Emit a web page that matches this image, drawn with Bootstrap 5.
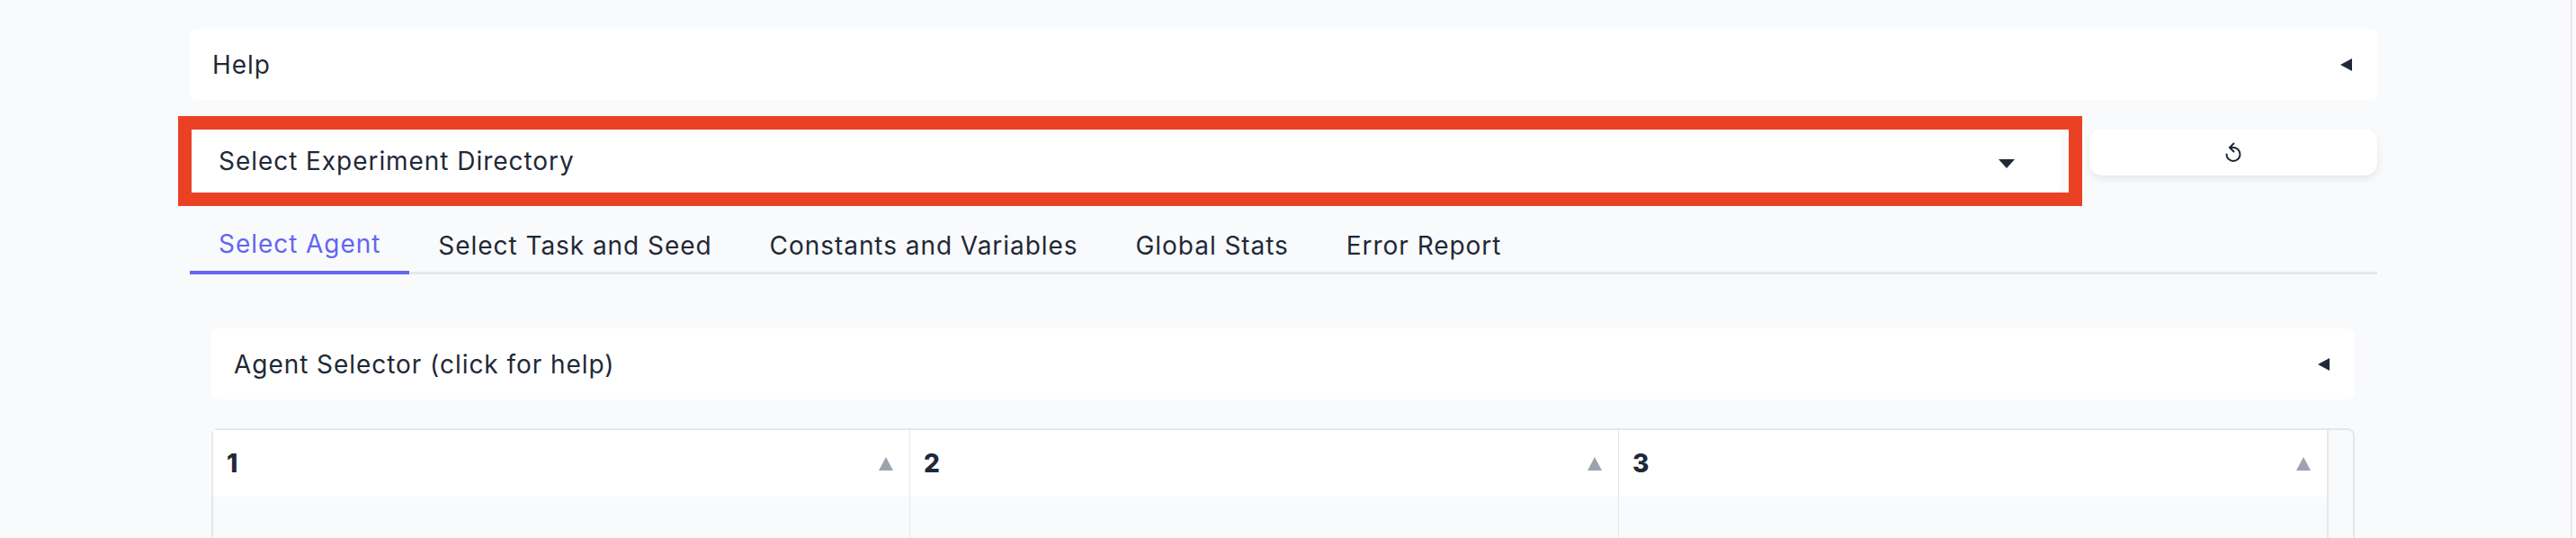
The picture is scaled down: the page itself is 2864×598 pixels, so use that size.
<!DOCTYPE html>
<html lang="en">
<head>
  <meta charset="UTF-8">
  <title>Experiment Viewer</title>
  <link href="https://cdn.jsdelivr.net/npm/bootstrap@5.3.0/dist/css/bootstrap.min.css" rel="stylesheet">
  <style>
    html { background-color: #fbfbfc; }
    body {
      width: 2860px;
      height: 598px;
      overflow: hidden;
      background-color: #f9fafb;
      color: #1f2937;
      font-family: "Inter", "Open Sans", sans-serif;
      font-size: 28px;
      letter-spacing: .95px;
      border-right: 2px solid #e5e7eb;
    }
    .page-wrap { padding: 32px 215px 0 211px; }
    .fold-bar {
      height: 79px;
      background: #fff;
      border-radius: 8px;
      padding: 0 28px 0 25px;
    }
    .tri-left {
      width: 0; height: 0;
      border-top: 7px solid transparent;
      border-bottom: 7px solid transparent;
      border-right: 13px solid #1f2937;
    }
    .tri-down {
      width: 0; height: 0;
      margin-top: 6px;
      border-left: 9px solid transparent;
      border-right: 9px solid transparent;
      border-top: 10px solid #1f2937;
    }
    .tri-up {
      width: 0; height: 0;
      border-left: 8px solid transparent;
      border-right: 8px solid transparent;
      border-bottom: 15px solid #9ca3af;
    }
    .picker-row { margin-top: 18px; margin-left: -13px; height: 100px; }
    .picker-frame {
      width: 2117px;
      border: 15px solid #ea4125;
      height: 100px;
      background: #f9fafb;
      padding-right: 9px;
    }
    .picker-field { background: #fff; padding: 0 51px 0 30px; }
    .reset-btn {
      width: 320px;
      height: 52px;
      margin: 14px 0 0 8px;
      background: #fff;
      border-radius: 14px;
      box-shadow: 0 4px 8px rgba(0,0,0,.08);
    }
    .tab-row { height: 76px; border-bottom: 3px solid #e5e7eb; }
    .tab-item { padding: 12px 32px 0; height: 76px; margin-bottom: -3px; }
    .tab-on { color: #6366f1; border-bottom: 4px solid #6366f1; }
    .agent-wrap { padding: 60px 25px 0 24px; }
    .table-shell {
      margin-top: 32px;
      height: 122px;
      border: 2px solid #e5e7eb;
      border-bottom: 0;
      border-radius: 8px 8px 0 0;
    }
    .col-head {
      height: 74px;
      background: #fff;
      padding: 0 18px 0 15px;
      font-weight: 800;
      letter-spacing: 0;
    }
    .col-one { width: 775px; }
    .col-two, .col-three { width: 788px; }
    .col-cell { border-right: 1px solid #e5e7eb; }
    .col-rest { flex: 1; border-left: 1px solid #e5e7eb; }
  </style>
</head>
<body>
<div class="page-wrap">
  <div class="fold-bar d-flex align-items-center justify-content-between">
    <span>Help</span><span class="tri-left"></span>
  </div>

  <div class="picker-row d-flex">
    <div class="picker-frame d-flex">
      <div class="picker-field flex-grow-1 d-flex align-items-center justify-content-between">
        <span>Select Experiment Directory</span><span class="tri-down"></span>
      </div>
    </div>
    <button type="button" class="reset-btn border-0 d-flex align-items-center justify-content-center p-0" aria-label="Reset">
      <svg width="18" height="22" viewBox="0 0 18 22" fill="none" stroke="#1f2937" stroke-width="2" stroke-linecap="round" stroke-linejoin="round">
        <path d="M5 6H9a7.5 7.5 0 1 1-7.5 7.5"/><path d="M9.5 1.5 5 6l4.5 4.5"/>
      </svg>
    </button>
  </div>

  <div class="tab-row d-flex">
    <div class="tab-item tab-on d-flex align-items-center">Select Agent</div>
    <div class="tab-item d-flex align-items-center">Select Task and Seed</div>
    <div class="tab-item d-flex align-items-center">Constants and Variables</div>
    <div class="tab-item d-flex align-items-center">Global Stats</div>
    <div class="tab-item d-flex align-items-center">Error Report</div>
  </div>

  <div class="agent-wrap">
    <div class="fold-bar d-flex align-items-center justify-content-between">
      <span>Agent Selector (click for help)</span><span class="tri-left"></span>
    </div>
    <div class="table-shell d-flex">
      <div class="col-cell col-one"><div class="col-head d-flex align-items-center justify-content-between"><span>1</span><span class="tri-up"></span></div></div>
      <div class="col-cell col-two"><div class="col-head d-flex align-items-center justify-content-between"><span>2</span><span class="tri-up"></span></div></div>
      <div class="col-cell col-three"><div class="col-head d-flex align-items-center justify-content-between"><span>3</span><span class="tri-up"></span></div></div>
      <div class="col-rest"></div>
    </div>
  </div>
</div>
</body>
</html>
